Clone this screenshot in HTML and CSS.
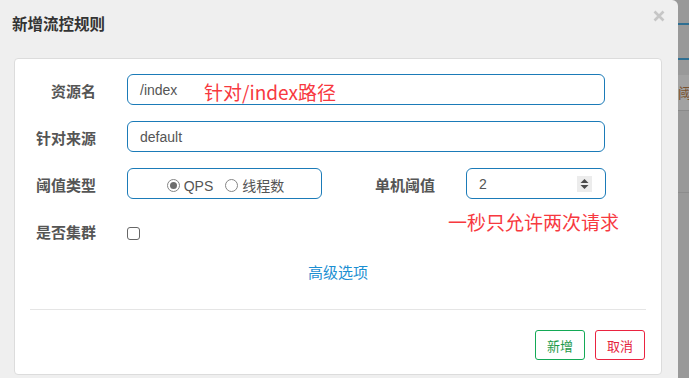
FILE: index.html
```html
<!DOCTYPE html>
<html lang="zh-CN">
<head>
<meta charset="utf-8">
<title>新增流控规则</title>
<link rel="stylesheet" href="styles.css">
</head>
<body>
<div class="page">
  <div class="modal">
    <div class="modal-header">
      <h4 class="title">新增流控规则</h4>
      <svg class="close" width="12" height="12" viewBox="0 0 12 12"><path d="M1.5 1.5 L10.5 10.5 M10.5 1.5 L1.5 10.5" stroke="#c6c6c6" stroke-width="2.6" fill="none"/></svg>
    </div>
    <div class="panel">
      <div class="row">
        <label class="lbl">资源名</label>
        <div class="field wide"><span class="val">/index</span></div>
      </div>
      <div class="row">
        <label class="lbl">针对来源</label>
        <div class="field wide"><span class="val">default</span></div>
      </div>
      <div class="row">
        <label class="lbl">阈值类型</label>
        <div class="field radios">
          <span class="radio checked"></span><span class="rtext">QPS</span>
          <span class="radio second"></span><span class="rtext">线程数</span>
        </div>
        <label class="lbl lbl2">单机阈值</label>
        <div class="field num">
          <span class="val">2</span>
          <span class="spin">
            <svg width="15" height="16" viewBox="0 0 15 16"><path d="M3.5 7 L7.5 3 L11.5 7 Z M3.5 9 L7.5 13 L11.5 9 Z" fill="#4a4a4a"/></svg>
          </span>
        </div>
      </div>
      <div class="row row-cluster">
        <label class="lbl">是否集群</label>
        <span class="checkbox"></span>
      </div>
      <div class="adv"><a class="adv-link">高级选项</a></div>
      <div class="sep"></div>
      <div class="footer">
        <button class="btn btn-ok">新增</button>
        <button class="btn btn-cancel">取消</button>
      </div>
      <div class="note note1">针对/index路径</div>
      <div class="note note2">一秒只允许两次请求</div>
    </div>
  </div>
  <div class="backdrop">
    <div class="bd-a"></div>
    <div class="bd-line"></div>
    <div class="bd-b"></div>
    <div class="bd-line"></div>
    <div class="bd-c"></div>
    <div class="bd-band"><span class="bd-text">阈值</span></div>
    <div class="bd-d"></div>
  </div>
</div>
</body>
</html>
```

FILE: styles.css
```css
* { box-sizing: border-box; }
html, body { margin: 0; padding: 0; }
body {
  width: 689px;
  height: 378px;
  overflow: hidden;
  background: #999;
  font-family: "Liberation Sans", "Noto Sans CJK SC", sans-serif;
}
.page {
  display: flex;
  height: 378px;
}
.modal {
  position: relative;
  width: 678px;
  flex: none;
  height: 378px;
  background: #efefef;
  border-top-right-radius: 6px;
}
.modal-header {
  height: 58px;
  padding: 15px 12px 0 12px;
}
.title {
  margin: 0;
  font-size: 15.5px;
  line-height: 20px;
  font-weight: bold;
  color: #333;
}
.close {
  position: absolute;
  left: 653px;
  top: 10px;
}
.panel {
  position: relative;
  margin-left: 14px;
  width: 648px;
  background: #fff;
  border: 1px solid #dcdcdc;
  border-radius: 4px;
  padding: 15px 15px 14px 15px;
}
.row {
  display: flex;
  align-items: center;
  height: 31px;
  margin-bottom: 16px;
}
.row-cluster {
  margin-top: 3px;
  margin-bottom: 0;
}
.lbl {
  width: 66px;
  margin-right: 31px;
  text-align: right;
  font-size: 15px;
  font-weight: bold;
  color: #555;
  padding-top: 2px;
  white-space: nowrap;
}
.lbl2 {
  width: 113px;
}
.field {
  height: 31px;
  border: 1px solid #1b7bb8;
  border-radius: 6px;
  display: flex;
  align-items: center;
  font-size: 14px;
  color: #555;
}
.wide {
  width: 478px;
  padding-left: 12px;
}
.val {
  padding-top: 1px;
}
.radios {
  width: 195px;
  justify-content: center;
  padding-top: 4px;
  padding-left: 2px;
}
.radio {
  width: 13px;
  height: 13px;
  border: 1px solid #858585;
  border-radius: 50%;
  background: #fff;
  display: flex;
  align-items: center;
  justify-content: center;
  margin-right: 4px;
}
.radio.checked::after {
  content: "";
  width: 7px;
  height: 7px;
  border-radius: 50%;
  background: #6e6e6e;
}
.radio.second {
  margin-left: 12px;
}
.rtext {
  line-height: 16px;
}
.num {
  width: 140px;
  padding-left: 12px;
  padding-right: 13px;
  justify-content: space-between;
}
.spin {
  width: 15px;
  height: 16px;
  background: #ececec;
  display: block;
}
.spin svg { display: block; }
.checkbox {
  width: 13px;
  height: 13px;
  border: 1px solid #666;
  border-radius: 3px;
  background: #fff;
  margin-top: 6px;
}
.adv {
  margin-top: 17px;
  text-align: center;
  line-height: 20px;
  font-size: 15px;
}
.adv-link {
  color: #1c8fd2;
}
.sep {
  margin-top: 26px;
  height: 1px;
  background: #e5e5e5;
}
.footer {
  margin-top: 20px;
  display: flex;
  justify-content: flex-end;
  gap: 10px;
  padding-right: 1px;
}
.btn {
  width: 50px;
  height: 30px;
  background: #fff;
  border-radius: 3px;
  font-family: "Liberation Sans", "Noto Sans CJK SC", sans-serif;
  font-size: 13px;
  padding: 0;
}
.btn-ok {
  border: 1px solid #13a956;
  color: #1d9a48;
}
.btn-cancel {
  border: 1px solid #ea2340;
  color: #e5233d;
}
.note {
  position: absolute;
  color: #f7393f;
  white-space: nowrap;
  font-family: "Noto Sans CJK SC", sans-serif;
}
.note1 {
  left: 189px;
  top: 20px;
  font-size: 19px;
  line-height: 26px;
}
.note2 {
  left: 433px;
  top: 150px;
  font-size: 19px;
  line-height: 26px;
}
.backdrop {
  flex: 1;
  height: 378px;
  background: #999;
  overflow: hidden;
}
.bd-a { height: 23px; }
.bd-line { height: 2px; background: #2f6f92; }
.bd-b { height: 33px; }
.bd-c { height: 15px; }
.bd-band {
  height: 36px;
  background: #a2a2a2;
  border-bottom: 1px solid #8a8a8a;
  padding-top: 9px;
  white-space: nowrap;
}
.bd-text {
  font-size: 14px;
  color: #7a5330;
  font-family: "Noto Sans CJK SC", sans-serif;
  line-height: 16px;
}
.bd-d { height: 82px; border-bottom: 1px solid #8c8c8c; }
```
